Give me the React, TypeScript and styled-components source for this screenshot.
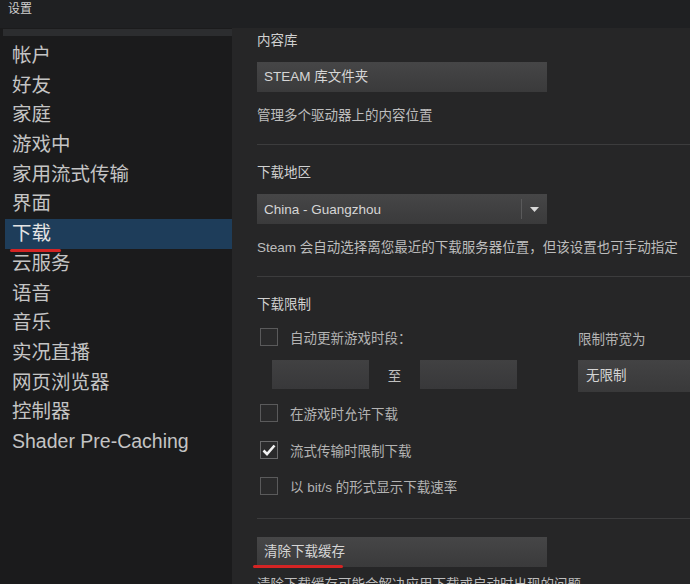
import React from "react";
import styled, { createGlobalStyle } from "styled-components";

const GlobalStyle = createGlobalStyle`
  html, body {
    margin: 0;
    padding: 0;
    background: #1f2022;
    overflow: hidden;
  }
  * { box-sizing: border-box; }
`;

const FONT = `"Liberation Sans", "Noto Sans CJK SC", sans-serif`;

const navItems = [
    "帐户", "好友", "家庭", "游戏中", "家用流式传输", "界面", "下载",
    "云服务", "语音", "音乐", "实况直播", "网页浏览器", "控制器", "Shader Pre-Caching",
];

export default function App() {
    return (
        <Window>
            <GlobalStyle />
            <TitleBar>设置</TitleBar>
            <Body>
                <Sidebar>
                    <ScrollHead />
                    <NavList>
                        {navItems.map((item) => (
                            <NavItem key={item} $active={item === "下载"}>
                                {item === "下载" ? <Marked>{item}</Marked> : item}
                            </NavItem>
                        ))}
                    </NavList>
                </Sidebar>

                <Main>
                    <Heading>内容库</Heading>
                    <WideButton style={{ marginTop: 13 }}>STEAM 库文件夹</WideButton>
                    <Desc>管理多个驱动器上的内容位置</Desc>
                    <Divider />

                    <Heading>下载地区</Heading>
                    <Dropdown>
                        <span>China - Guangzhou</span>
                        <DropToggle>
                            <svg width="9" height="5" viewBox="0 0 9 5">
                                <path d="M0 0 H9 L4.5 5 Z" fill="#d8d8d8" />
                            </svg>
                        </DropToggle>
                    </Dropdown>
                    <Desc>Steam 会自动选择离您最近的下载服务器位置，但该设置也可手动指定</Desc>
                    <Divider />

                    <Heading>下载限制</Heading>
                    <LimitGrid>
                        <LimitLeft>
                            <CheckRow style={{ marginTop: 0 }}>
                                <CheckBox />
                                <CheckLabel>自动更新游戏时段：</CheckLabel>
                            </CheckRow>
                            <TimeRow>
                                <TimeInput />
                                <To>至</To>
                                <TimeInput />
                            </TimeRow>
                        </LimitLeft>
                        <LimitRight>
                            <SideLabel>限制带宽为</SideLabel>
                            <LimitSelect>无限制</LimitSelect>
                        </LimitRight>
                    </LimitGrid>
                    <CheckRow style={{ marginTop: 12 }}>
                        <CheckBox />
                        <CheckLabel>在游戏时允许下载</CheckLabel>
                    </CheckRow>
                    <CheckRow>
                        <CheckBox $checked>
                            <svg width="14" height="12" viewBox="0 0 14 12">
                                <path d="M1.5 6.5 L5 10 L12.5 1.5" fill="none" stroke="#f2f2f2" strokeWidth="2.6" />
                            </svg>
                        </CheckBox>
                        <CheckLabel>流式传输时限制下载</CheckLabel>
                    </CheckRow>
                    <CheckRow>
                        <CheckBox />
                        <CheckLabel>以 bit/s 的形式显示下载速率</CheckLabel>
                    </CheckRow>
                    <Divider style={{ marginTop: 23, marginBottom: 18 }} />

                    <ButtonWrap>
                        <WideButton>清除下载缓存</WideButton>
                        <RedMark />
                    </ButtonWrap>
                    <Desc style={{ marginTop: 10 }}>清除下载缓存可能会解决应用下载或启动时出现的问题</Desc>
                </Main>
            </Body>
        </Window>
    );
}

const Window = styled.div`
width: 690px;
height: 584px;
display: flex;
flex-direction: column;
font-family: ${FONT};
overflow: hidden;
`;

const TitleBar = styled.div`
height: 28px;
flex-shrink: 0;
background: #1f2022;
color: #cfcfcf;
font-size: 12px;
line-height: 14px;
padding: 2px 0 0 8px;
`;

const Body = styled.div`
flex: 1;
display: flex;
min-height: 0;
`;

const Sidebar = styled.div`
width: 232px;
flex-shrink: 0;
background: #1b1b1c;
padding-top: 1px;
`;

const ScrollHead = styled.div`
height: 7px;
margin-left: 3px;
background: #2c2d2f;
`;

const NavList = styled.div`
margin-top: 5px;
display: flex;
flex-direction: column;
`;

const NavItem = styled.div<{ $active?: boolean }>`
height: 29.7px;
line-height: 29.7px;
margin-left: 5px;
padding-left: 7px;
font-size: 19.5px;
color: ${(p) => (p.$active ? "#e4e4e4" : "#c4c4c4")};
background: ${(p) => (p.$active ? "#1e3d5a" : "transparent")};
white-space: nowrap;
`;

const Marked = styled.span`
position: relative;
&::after {
    content: "";
    position: absolute;
    left: -2px;
    right: -10px;
    bottom: -8px;
    height: 3px;
    border-radius: 2px;
    background: #d42424;
}
`;

const Main = styled.div`
flex: 1;
background: #262627;
padding: 5px 0 0 25px;
overflow: hidden;
color: #c8c8c8;
font-size: 13.5px;
`;

const Heading = styled.div`
line-height: 16px;
color: #d0d0d0;
`;

const WideButton = styled.div`
width: 290px;
height: 30px;
line-height: 30px;
padding-left: 7px;
background: linear-gradient(#464647, #3a3a3b);
color: #d6d6d6;
font-size: 13.5px;
`;

const Desc = styled.div`
margin-top: 16px;
line-height: 16px;
color: #bdbdbd;
white-space: nowrap;
`;

const Divider = styled.div`
height: 1px;
margin: 20px 0 20px;
background: #3c3c3d;
`;

const Dropdown = styled.div`
margin-top: 13px;
width: 290px;
height: 30px;
display: flex;
align-items: center;
justify-content: space-between;
padding-left: 7px;
background: linear-gradient(#464647, #3a3a3b);
color: #d6d6d6;
`;

const DropToggle = styled.div`
width: 26px;
height: 20px;
border-left: 1px solid #5a5a5b;
display: flex;
align-items: center;
justify-content: center;
`;

const LimitGrid = styled.div`
margin-top: 15px;
display: flex;
`;

const LimitLeft = styled.div`
width: 321px;
flex-shrink: 0;
`;

const LimitRight = styled.div`
flex: 1;
padding-top: 4px;
`;

const SideLabel = styled.div`
line-height: 16px;
color: #b5b5b5;
`;

const LimitSelect = styled.div`
margin-top: 12px;
height: 32px;
line-height: 32px;
padding-left: 8px;
background: linear-gradient(#434344, #39393a);
color: #d6d6d6;
`;

const CheckRow = styled.div`
margin-top: 18.5px;
height: 18px;
display: flex;
align-items: center;
padding-left: 3px;
`;

const CheckBox = styled.div<{ $checked?: boolean }>`
width: 18px;
height: 18px;
border: 1px solid ${(p) => (p.$checked ? "#6a6a6b" : "#5a5a5b")};
background: #2a2a2b;
display: flex;
align-items: center;
justify-content: center;
`;

const CheckLabel = styled.span`
margin-left: 12px;
color: #b3b3b3;
white-space: nowrap;
`;

const TimeRow = styled.div`
margin-top: 14px;
padding-left: 15px;
display: flex;
align-items: center;
`;

const TimeInput = styled.div`
width: 97px;
height: 29px;
background: linear-gradient(#414142, #38383a);
`;

const To = styled.span`
width: 51px;
text-align: center;
color: #c0c0c0;
`;

const ButtonWrap = styled.div`
position: relative;
`;

const RedMark = styled.div`
position: absolute;
left: -4px;
top: 28px;
width: 90px;
height: 3px;
border-radius: 2px;
background: #d42424;
`;
